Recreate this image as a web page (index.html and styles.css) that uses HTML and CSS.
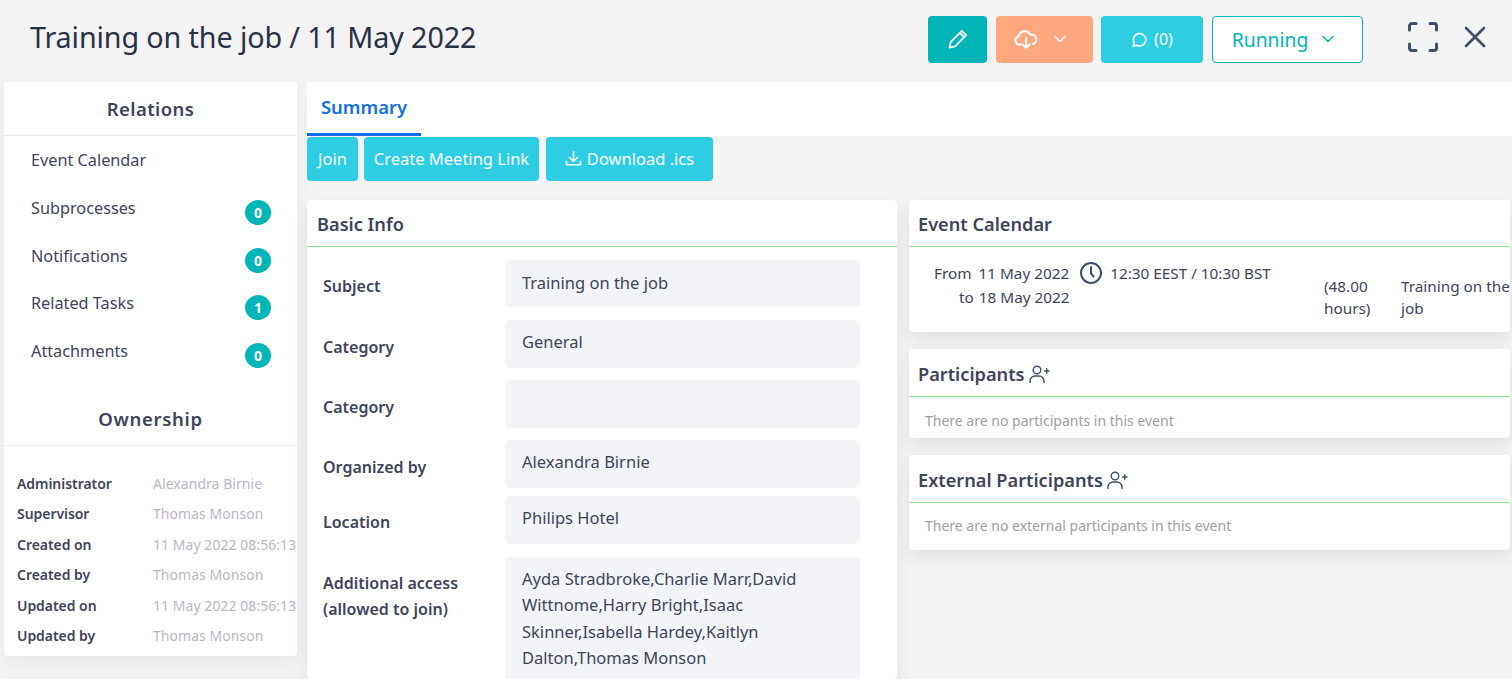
FILE: index.html
```html
<!DOCTYPE html>
<html>
    <head>
        <meta charset="UTF-8" />
        <meta name="viewport" content="width=device-width, initial-scale=1.0"/>
        <link rel="stylesheet" href="styles.css">
    </head>
    <body>
        <header class="topbar">
            <h1 class="title">Training on the job / 11 May 2022</h1>
            <div class="actions">
                <button class="btn btn-edit">
                    <svg width="22" height="22" viewBox="0 0 22 22" fill="none" stroke="#fff" stroke-width="1.800" stroke-linejoin="round"><path d="M2.500 19.500l1.200-5.500L14.800 2.800l4.400 4.400L8 18.300z"/><path d="M12.800 4.800l4.400 4.400"/></svg>
                </button>
                <button class="btn btn-cloud">
                    <svg width="24" height="22" viewBox="0 0 24 22" fill="none" stroke="#fff" stroke-width="2" stroke-linecap="round" stroke-linejoin="round"><path d="M7 16.500H5.500a4.200 4.200 0 0 1-.6-8.300 6 6 0 0 1 11.400-1.500 4.900 4.900 0 0 1 3 9.300"/><path d="M12 10v10M8.500 16.500L12 20l3.500-3.500"/></svg>
                    <svg class="chev" width="14" height="14" viewBox="0 0 14 14" fill="none" stroke="#fff" stroke-width="1.500" stroke-linecap="round" stroke-linejoin="round"><path d="M2 4.500l5 5 5-5"/></svg>
                </button>
                <button class="btn btn-comment">
                    <svg width="17" height="17" viewBox="0 0 17 17" fill="none" stroke="#fff" stroke-width="1.600" stroke-linejoin="round"><path d="M2.200 15.200l1-3.400a6.200 6.200 0 1 1 2.500 2.400z"/></svg>
                    <span>(0)</span>
                </button>
                <button class="btn btn-status">
                    <span>Running</span>
                    <svg width="14" height="14" viewBox="0 0 14 14" fill="none" stroke="#00b5b8" stroke-width="1.500" stroke-linecap="round" stroke-linejoin="round"><path d="M2 4.500l5 5 5-5"/></svg>
                </button>
            </div>
            <div class="window-icons">
                <svg width="32" height="32" viewBox="0 0 32 32" fill="none" stroke="#404e67" stroke-width="3" stroke-linecap="round" stroke-linejoin="round"><path d="M9 2.500H5A2.500 2.500 0 0 0 2.500 5v4M23 2.500h4A2.500 2.500 0 0 1 29.500 5v4M9 29.500H5A2.500 2.500 0 0 1 2.500 27v-4M23 29.500h4a2.500 2.500 0 0 0 2.500-2.500v-4"/></svg>
                <svg width="24" height="24" viewBox="0 0 24 24" fill="none" stroke="#404e67" stroke-width="2.600" stroke-linecap="round"><path d="M3 3l18 18M21 3L3 21"/></svg>
            </div>
        </header>

        <div class="page">
            <aside class="sidebar">
                <h2 class="side-title">Relations</h2>
                <ul class="relations">
                    <li>Event Calendar</li>
                    <li>Subprocesses <span class="badge">0</span></li>
                    <li>Notifications <span class="badge">0</span></li>
                    <li>Related Tasks <span class="badge">1</span></li>
                    <li>Attachments <span class="badge">0</span></li>
                </ul>
                <h2 class="side-title owner-title">Ownership</h2>
                <dl class="owner">
                    <div><dt>Administrator</dt><dd>Alexandra Birnie</dd></div>
                    <div><dt>Supervisor</dt><dd>Thomas Monson</dd></div>
                    <div><dt>Created on</dt><dd>11 May 2022 08:56:13</dd></div>
                    <div><dt>Created by</dt><dd>Thomas Monson</dd></div>
                    <div><dt>Updated on</dt><dd>11 May 2022 08:56:13</dd></div>
                    <div><dt>Updated by</dt><dd>Thomas Monson</dd></div>
                </dl>
            </aside>

            <main class="content">
                <nav class="tabs"><a class="tab">Summary</a></nav>
                <div class="tools">
                    <button class="tool tool-join">Join</button>
                    <button class="tool tool-link">Create Meeting Link</button>
                    <button class="tool tool-ics">
                        <svg width="17" height="17" viewBox="0 0 17 17" fill="none" stroke="#fff" stroke-width="1.600" stroke-linecap="round" stroke-linejoin="round"><path d="M8.500 1.500v9.500M4.500 7.500l4 4 4-4M1.500 11.500v3.200h14v-3.200"/></svg>
                        Download .ics
                    </button>
                </div>
                <div class="columns">
                    <section class="card basic">
                        <h3 class="card-head">Basic Info</h3>
                        <div class="form">
                            <div class="row row-subject"><label>Subject</label><div class="value">Training on the job</div></div>
                            <div class="row"><label>Category</label><div class="value">General</div></div>
                            <div class="row"><label>Category</label><div class="value"></div></div>
                            <div class="row row-organized"><label>Organized by</label><div class="value">Alexandra Birnie</div></div>
                            <div class="row row-location"><label>Location</label><div class="value">Philips Hotel</div></div>
                            <div class="row row-access"><label>Additional access (allowed to join)</label><div class="value">Ayda Stradbroke,Charlie Marr,David Wittnome,Harry Bright,Isaac Skinner,Isabella Hardey,Kaitlyn Dalton,Thomas Monson</div></div>
                        </div>
                    </section>

                    <div class="right">
                        <section class="card">
                            <h3 class="card-head head-event">Event Calendar</h3>
                            <div class="event">
                                <div class="event-dates">
                                    <div class="event-line">
                                        <span class="ev-label">From</span><span>11 May 2022</span>
                                        <svg class="clock" width="24" height="24" viewBox="0 0 24 24" fill="none" stroke="#404e67" stroke-width="2" stroke-linecap="round"><circle cx="12" cy="12" r="10"/><path d="M12 6v6.500l2.500 3"/></svg>
                                        <span>12:30 EEST / 10:30 BST</span>
                                    </div>
                                    <div class="event-line event-to"><span class="ev-label">to</span><span>18 May 2022</span></div>
                                </div>
                                <div class="event-hours">(48.00 hours)</div>
                                <div class="event-name">Training on the job</div>
                            </div>
                        </section>
                        <section class="card">
                            <h3 class="card-head">Participants
                                <svg width="22" height="20" viewBox="0 0 22 20" fill="none" stroke="#404e67" stroke-width="1.400" stroke-linecap="round"><circle cx="9" cy="6" r="3.800"/><path d="M2 18.500v-1.500a5 5 0 0 1 5-5h4a5 5 0 0 1 5 5v1.500M16.500 7h4.500M18.750 4.750v4.500"/></svg>
                            </h3>
                            <p class="empty">There are no participants in this event</p>
                        </section>
                        <section class="card">
                            <h3 class="card-head">External Participants
                                <svg width="22" height="20" viewBox="0 0 22 20" fill="none" stroke="#404e67" stroke-width="1.400" stroke-linecap="round"><circle cx="9" cy="6" r="3.800"/><path d="M2 18.500v-1.500a5 5 0 0 1 5-5h4a5 5 0 0 1 5 5v1.500M16.500 7h4.500M18.750 4.750v4.500"/></svg>
                            </h3>
                            <p class="empty empty-ext">There are no external participants in this event</p>
                        </section>
                    </div>
                </div>
            </main>
        </div>
    </body>
</html>
```

FILE: styles.css
```css
* {
    box-sizing: border-box;
}
html, body {
    height: 679px;
    overflow: hidden;
}
body {
    margin: 0;
    background-color: #f3f3f3;
    color: #3f4459;
    font-family: "Noto Sans", "Open Sans", sans-serif;
    font-size: 16px;
}
button {
    font-family: inherit;
    border: 0;
    color: #fff;
    padding: 0;
}
h1, h2, h3, p, ul, dl, dd {
    margin: 0;
    padding: 0;
}

/* top bar */
.topbar {
    display: flex;
    align-items: center;
    height: 82px;
    padding: 0 0 8px 30px;
}
.title {
    flex: 1;
    font-size: 28.700px;
    font-weight: 400;
    color: #2b3144;
    letter-spacing: -0.1px;
    margin-top: -2px;
}
.actions {
    display: flex;
    gap: 8px;
    margin-top: 4px;
}
.btn {
    display: flex;
    align-items: center;
    justify-content: center;
    height: 47px;
    border-radius: 4px;
    font-size: 16px;
}
.btn-edit {
    width: 59px;
    background-color: #00b5b8;
}
.btn-cloud {
    width: 97px;
    margin-left: 1px;
    padding-right: 9px;
    gap: 15px;
    background-color: #ffa87d;
}
.btn-comment {
    width: 102px;
    gap: 6px;
    background-color: #2dcee3;
}
.btn-status {
    width: 151px;
    gap: 13px;
    margin-left: 1px;
    padding-right: 8px;
    background-color: #fff;
    border: 1px solid #00b5b8;
    color: #00b5b8;
    font-size: 19.300px;
}
.window-icons {
    display: flex;
    align-items: center;
    gap: 24px;
    width: 149px;
    padding-left: 44px;
}

/* layout */
.page {
    display: flex;
    align-items: flex-start;
    padding-left: 4px;
}
.sidebar {
    width: 293px;
    height: 574px;
    background-color: #fff;
    border-radius: 4px;
    box-shadow: 0 8px 16px rgba(60, 60, 90, 0.06);
    overflow: hidden;
}
.side-title {
    height: 54px;
    line-height: 54px;
    text-align: center;
    font-size: 18.500px;
    font-weight: 600;
    letter-spacing: 0.4px;
    border-bottom: 1px solid #ededed;
}
.relations {
    list-style: none;
    height: 257px;
}
.relations li {
    position: relative;
    height: 47.800px;
    padding: 12px 0 0 27px;
    font-size: 16.250px;
    line-height: 24px;
}
.badge {
    position: absolute;
    right: 26px;
    top: 16px;
    width: 26px;
    height: 25px;
    line-height: 25px;
    border-radius: 50%;
    background-color: #00b5b8;
    color: #fff;
    text-align: center;
    font-size: 14px;
    font-weight: 700;
}
.owner-title {
    letter-spacing: 0.7px;
    height: 53px;
    line-height: 52px;
}
.owner {
    padding: 22.500px 0 0 13px;
}
.owner div {
    display: flex;
    height: 30.500px;
    line-height: 30px;
    font-size: 14px;
    white-space: nowrap;
}
.owner dt {
    width: 136px;
    font-weight: 600;
    letter-spacing: -0.05px;
}
.owner dd {
    color: #bcb6c4;
    letter-spacing: 0.05px;
}

/* main */
.content {
    flex: 1;
    margin-left: 10px;
    min-width: 0;
}
.tabs {
    height: 54px;
    background-color: #fff;
    border-radius: 4px 0 0 0;
}
.tab {
    display: block;
    width: 114px;
    height: 54px;
    padding: 12px 0 0 14px;
    font-size: 18.400px;
    font-weight: 600;
    color: #1170e4;
    border-bottom: 3px solid #0a6fe8;
}
.tools {
    display: flex;
    margin-top: 1px;
    height: 44px;
}
.tool {
    height: 44px;
    padding-bottom: 2px;
    border-radius: 4px;
    background-color: #2dcee3;
    font-size: 16.500px;
}
.tool-join {
    width: 51px;
}
.tool-link {
    width: 175px;
    margin-left: 6px;
}
.tool-ics {
    display: flex;
    align-items: center;
    justify-content: center;
    gap: 5px;
    width: 167px;
    margin-left: 7px;
}
.columns {
    display: flex;
    align-items: flex-start;
    gap: 12px;
    margin-top: 19px;
}
.card {
    background-color: #fff;
    border-radius: 4px;
    box-shadow: 0 8px 16px rgba(60, 60, 90, 0.09);
}
.card-head {
    display: flex;
    align-items: center;
    gap: 3px;
    height: 48px;
    padding: 3px 0 0 9px;
    font-size: 18.200px;
    font-weight: 600;
    border-bottom: 1px solid #8ee88a;
}
.basic {
    width: 590px;
    height: 479px;
    overflow: hidden;
}
.basic .card-head {
    height: 47px;
    padding: 1px 0 0 10px;
}
.form {
    padding: 13px 37px 0 16px;
}
.row {
    display: flex;
    margin-bottom: 12px;
}
.row label {
    width: 182px;
    padding-top: 14px;
    font-size: 16px;
    font-weight: 600;
    line-height: 26px;
}
.value {
    flex: 1;
    min-height: 48px;
    padding: 9px 17px;
    background-color: #f2f4f7;
    border-radius: 6px;
    font-size: 16.500px;
    line-height: 26px;
}
.row-subject {
    margin-bottom: 13px;
}
.row-subject label {
    padding-top: 13px;
}
.row-subject .value {
    min-height: 47px;
    padding-top: 10px;
}
.row-organized {
    margin-bottom: 8px;
}
.row-location {
    margin-bottom: 13px;
}
.row-location label, .row-access label {
    padding-top: 13px;
}
.row-access label {
    padding-right: 20px;
}
.row-access .value {
    line-height: 26.400px;
}
.right {
    display: flex;
    flex-direction: column;
    gap: 17px;
    width: 601px;
}
.head-event {
    height: 47px;
    padding-top: 2px;
}
.event {
    display: flex;
    height: 85px;
    font-size: 15.300px;
    line-height: 22px;
}
.event-dates {
    width: 415px;
    padding: 14px 0 0 25px;
}
.event-line {
    display: flex;
    align-items: center;
    height: 24px;
    gap: 7px;
}
.event-to {
    padding-left: 25px;
    gap: 5px;
}
.clock {
    margin-left: 3px;
}
.event-hours {
    width: 77px;
    padding-top: 28px;
}
.event-name {
    flex: 1;
    padding-top: 28px;
}
.empty {
    padding: 14px 16px 0;
    height: 41px;
    font-size: 14px;
    color: #a19ea5;
}
.empty-ext {
    height: 47px;
    padding-top: 13px;
}
```
